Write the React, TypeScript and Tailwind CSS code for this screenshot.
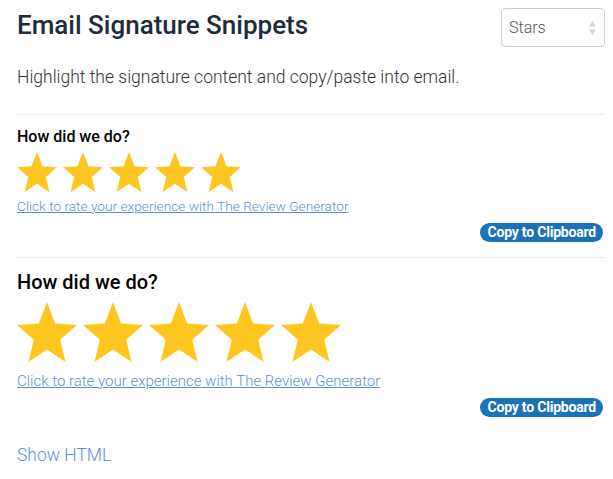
import React from "react";

const Star = ({ size }: { size: number }) => (
  <svg width={size} height={size} viewBox="0.8 1.2 22.4 21.3" preserveAspectRatio="none" className="block">
    <path
      d="M12 1.2l3.05 7.6 8.15.55-6.27 5.22 2 7.93L12 18.1l-6.93 4.4 2-7.93L.8 9.35l8.15-.55z"
      fill="#FFC520"
    />
  </svg>
);

const CopyButton = () => (
  <button className="mr-[2px] rounded-full bg-[#1a72b8] px-[7px] text-[14px] leading-[19px] font-bold text-white tracking-[-0.2px]">
    Copy to Clipboard
  </button>
);

export default function App() {
  return (
    <div className="w-[613px] h-[479px] bg-white pl-[17px] pr-[8px] font-['Roboto',sans-serif] overflow-hidden">
      <div className="flex items-start justify-between pt-[8px]">
        <h1 className="mt-[2px] text-[26px] leading-[30px] font-medium text-[#1d2c3a]">Email Signature Snippets</h1>
        <div className="flex h-[39px] w-[104px] items-center justify-between rounded-[4px] border border-[#cfcfcf] pl-[7px] pr-[7px]">
          <span className="text-[16px] font-light text-[#555]">Stars</span>
          <svg width="9" height="16" viewBox="0 0 9 16">
            <path d="M4.5 1L8 6.5H1z" fill="#d6d6d6" />
            <path d="M4.5 15L8 9.5H1z" fill="#d6d6d6" />
          </svg>
        </div>
      </div>
      <p className="mt-[19px] text-[17.5px] leading-[22px] font-light text-[#333]">
        Highlight the signature content and copy/paste into email.
      </p>

      <div className="mt-[26px] border-t border-[#ececec]">
        <div className="mt-[12px] text-[16px] leading-[20px] font-medium text-black">How did we do?</div>
        <div className="mt-[5px] flex gap-[6px]">
          {[0, 1, 2, 3, 4].map((i) => (
            <Star key={i} size={40} />
          ))}
        </div>
        <a className="mt-[6px] block text-[13.7px] leading-[16px] font-light text-[#5c8fdb] underline">
          Click to rate your experience with The Review Generator
        </a>
        <div className="mt-[9px] mb-[15px] flex justify-end">
          <CopyButton />
        </div>
      </div>

      <div className="border-t border-[#ececec]">
        <div className="mt-[12px] text-[20px] leading-[24px] font-medium text-black">How did we do?</div>
        <div className="mt-[8px] flex gap-[6px]">
          {[0, 1, 2, 3, 4].map((i) => (
            <Star key={i} size={60} />
          ))}
        </div>
        <a className="mt-[10px] block text-[15px] leading-[18px] font-light text-[#5c8fdb] underline">
          Click to rate your experience with The Review Generator
        </a>
        <div className="mt-[8px] flex justify-end">
          <CopyButton />
        </div>
      </div>

      <a className="mt-[27px] block text-[17.5px] leading-[22px] font-light text-[#5c8fdb]">Show HTML</a>
    </div>
  );
}
